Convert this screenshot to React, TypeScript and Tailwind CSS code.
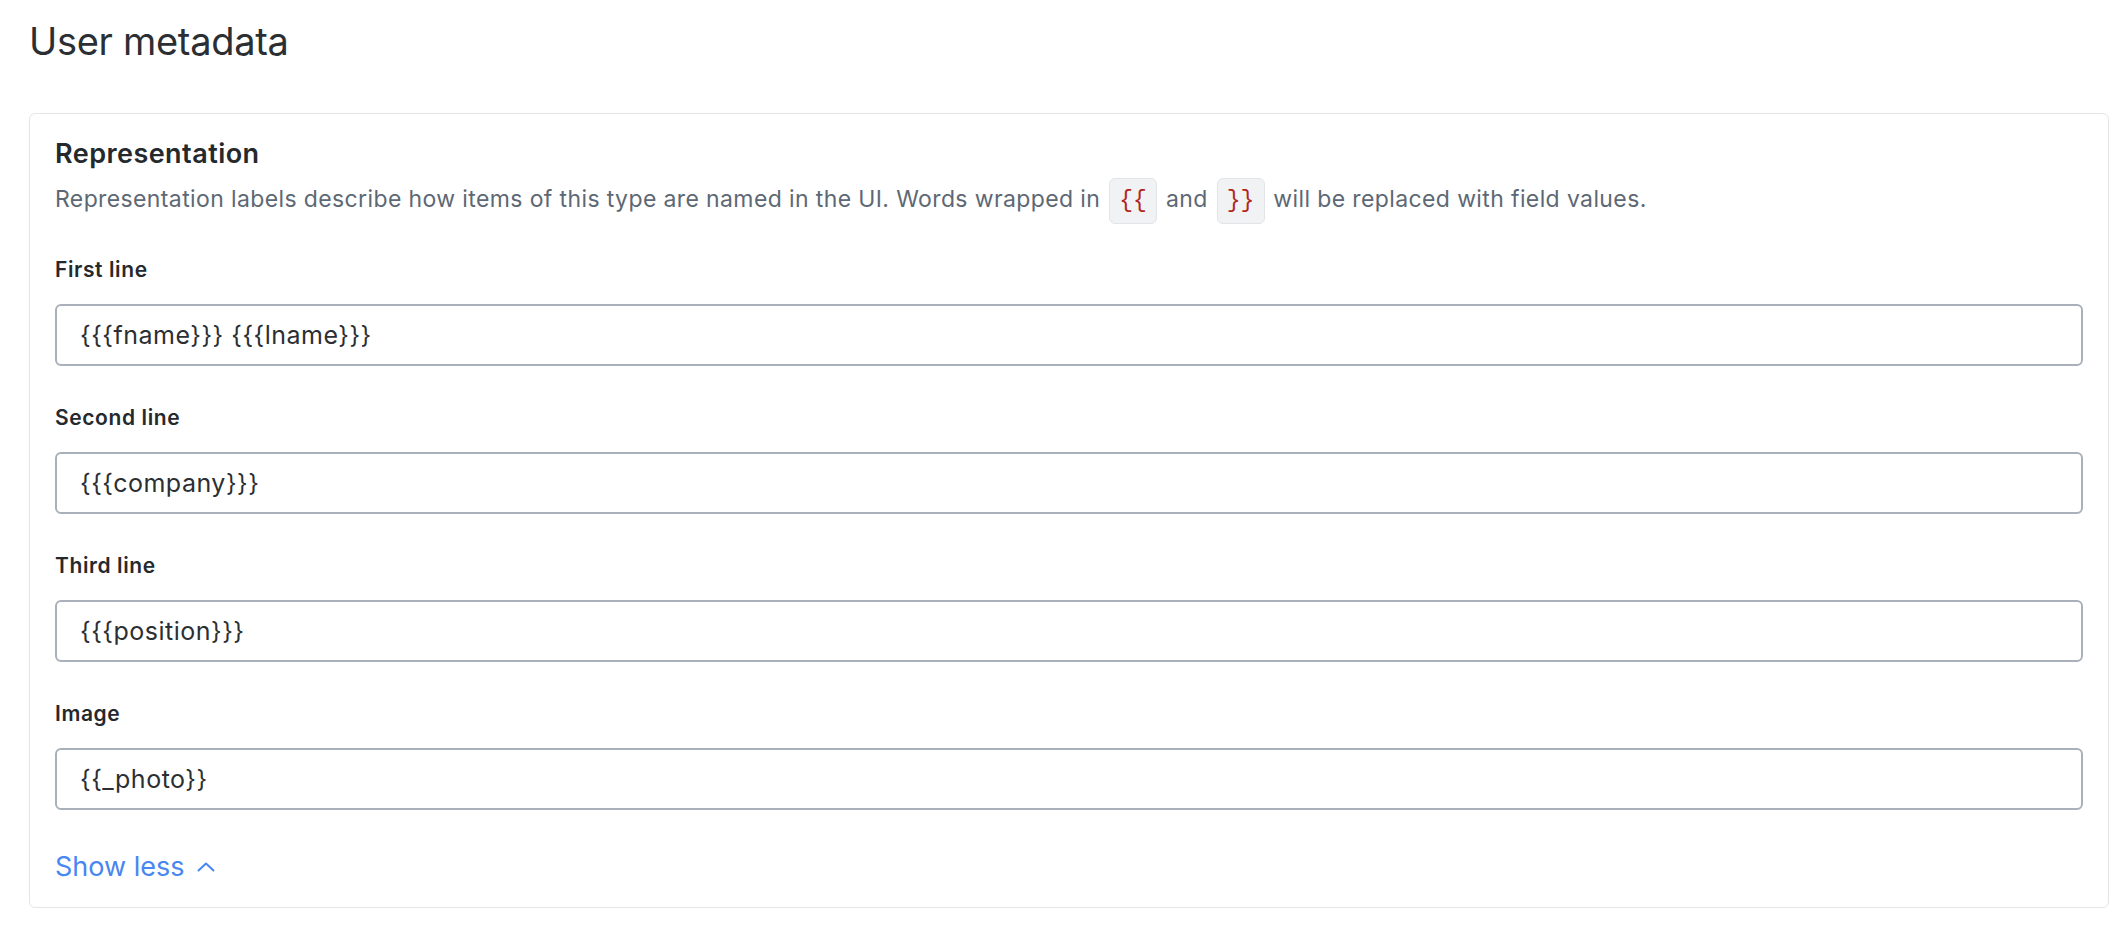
import React, { useState } from 'react';

const fields = [
  { id: 'first', label: 'First line', value: '{{{fname}}} {{{lname}}}' },
  { id: 'second', label: 'Second line', value: '{{{company}}}' },
  { id: 'third', label: 'Third line', value: '{{{position}}}' },
  { id: 'image', label: 'Image', value: '{{_photo}}' },
];

const Code: React.FC<{ children: React.ReactNode }> = ({ children }) => (
  <code className="inline-block align-middle -my-[7px] mx-[2px] h-[46px] w-[48px] leading-[44px] text-center rounded-[6px] border border-[#e2e4e7] bg-[#f1f2f4] text-[#b3261e] text-[23px] tracking-normal font-['Liberation_Mono',monospace]">
    {children}
  </code>
);

export default function App() {
  const [values, setValues] = useState<Record<string, string>>(
    Object.fromEntries(fields.map((f) => [f.id, f.value]))
  );
  const [expanded, setExpanded] = useState(true);

  return (
    <div className="min-h-screen bg-white pl-[29px] pr-[19px] pt-[18px] font-['Inter',sans-serif]">
      <h1 className="text-[38px] leading-[46px] font-normal text-[#2b2f33] tracking-[-0.3px]">User metadata</h1>

      <div className="mt-[49px] rounded-[6px] border border-[#e3e5e8] px-[25px] pt-[23px] pb-[23px]">
        <h2 className="text-[27px] leading-[34px] font-semibold text-[#24292e] tracking-[0.45px]">Representation</h2>
        <p className="mt-[12px] text-[23px] leading-[32px] text-[#5d6874] tracking-[0.38px]">
          Representation labels describe how items of this type are named in the UI. Words wrapped in{' '}
          <Code>{'{{'}</Code> and <Code>{'}}'}</Code> will be replaced with field values.
        </p>

        {expanded && (
          <div className="mt-[39px] flex flex-col gap-[38px]">
            {fields.map((f) => (
              <div key={f.id} className="flex flex-col gap-[20px]">
                <label htmlFor={f.id} className="text-[21px] leading-[28px] font-semibold text-[#25292d] tracking-[0.6px]">
                  {f.label}
                </label>
                <input
                  id={f.id}
                  type="text"
                  value={values[f.id]}
                  onChange={(e) => setValues({ ...values, [f.id]: e.target.value })}
                  className="h-[62px] w-full rounded-[6px] border-2 border-[#aab0b9] px-[23px] text-[25px] tracking-[0.5px] text-[#2b2f33] focus:outline-none"
                />
              </div>
            ))}
          </div>
        )}

        <button
          onClick={() => setExpanded(!expanded)}
          className="mt-[40px] flex items-center gap-[13px] text-[27px] leading-[34px] text-[#4886f0]"
        >
          {expanded ? 'Show less' : 'Show more'}
          <svg width="18" height="10" viewBox="0 0 18 10" fill="none" className={expanded ? '' : 'rotate-180'}>
            <polyline points="1.5,8.5 9,1.5 16.5,8.5" stroke="currentColor" strokeWidth="2" strokeLinecap="round" strokeLinejoin="round" />
          </svg>
        </button>
      </div>
    </div>
  );
}
